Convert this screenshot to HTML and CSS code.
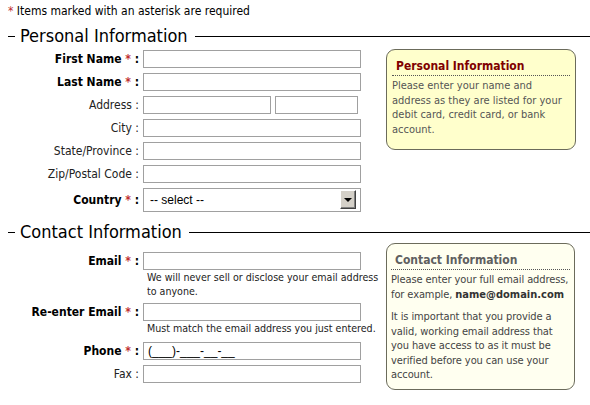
FILE: index.html
```html
<!DOCTYPE html>
<html>
<head>
<meta charset="utf-8">
<link rel="stylesheet" href="styles.css">
</head>
<body>
<p class="req"><span class="ast">*</span> Items marked with an asterisk are required</p>

<section class="sec">
  <h2 class="legend"><span class="dash"></span><span class="lt">Personal Information</span><span class="rule"></span></h2>
  <div class="cols">
    <div class="fields">
      <div class="row"><label class="lbl b">First Name <span class="ast">*</span> :</label><span class="inp"></span></div>
      <div class="row"><label class="lbl b">Last Name <span class="ast">*</span> :</label><span class="inp"></span></div>
      <div class="row"><label class="lbl">Address :</label><span class="pair"><span class="inp a1"></span><span class="inp a2"></span></span></div>
      <div class="row"><label class="lbl">City :</label><span class="inp"></span></div>
      <div class="row"><label class="lbl">State/Province :</label><span class="inp"></span></div>
      <div class="row"><label class="lbl">Zip/Postal Code :</label><span class="inp"></span></div>
      <div class="row"><label class="lbl b">Country <span class="ast">*</span> :</label><span class="sel"><span class="seltext">-- select --</span><span class="arrow"><span class="tri"></span></span></span></div>
    </div>
    <aside class="box box1">
      <h3 class="bt">Personal Information</h3>
      <p class="bp">Please enter your name and address as they are listed for your debit card, credit card, or bank account.</p>
    </aside>
  </div>
</section>

<section class="sec sec2">
  <h2 class="legend"><span class="dash"></span><span class="lt">Contact Information</span><span class="rule"></span></h2>
  <div class="cols">
    <div class="fields">
      <div class="row"><label class="lbl b">Email <span class="ast">*</span> :</label><span class="inp"></span></div>
      <div class="hint h1">We will never sell or disclose your email address to anyone.</div>
      <div class="row"><label class="lbl b">Re-enter Email <span class="ast">*</span> :</label><span class="inp"></span></div>
      <div class="hint h2">Must match the email address you just entered.</div>
      <div class="row"><label class="lbl b">Phone <span class="ast">*</span> :</label><span class="inp"><span class="mask">(___)-___-__-__</span></span></div>
      <div class="row"><label class="lbl">Fax :</label><span class="inp"></span></div>
    </div>
    <aside class="box box2">
      <h3 class="bt">Contact Information</h3>
      <p class="bp"><span class="ln">Please enter your full email address,</span><span class="ln">for example, <b>name@domain.com</b></span></p>
      <p class="bp">It is important that you provide a valid, working email address that you have access to as it must be verified before you can use your account.</p>
    </aside>
  </div>
</section>
</body>
</html>
```
FILE: styles.css
```css
* { box-sizing: border-box; }
body {
  margin: 0;
  padding: 4px 0 0 8px;
  background: #fff;
  color: #000;
  font-family: "DejaVu Sans Condensed", "DejaVu Sans", sans-serif;
  font-stretch: semi-condensed;
  font-size: 11px;
}
.req { margin: 0; line-height: 14px; font-size: 12px; color: #000; }
.ast { color: #c03030; }

.legend {
  display: flex;
  align-items: center;
  margin: 8px 0 4px 0;
  font-size: 18px;
  font-weight: normal;
  line-height: 20px;
  height: 20px;
}
.dash { width: 7px; height: 1px; background: #000; margin-right: 5px; }
.lt { white-space: nowrap; }
.rule { flex: 1; height: 1px; background: #000; margin-left: 7px; }

.cols { display: flex; align-items: flex-start; }
.fields { width: 353px; display: flex; flex-direction: column; gap: 5px; }
.row { display: grid; grid-template-columns: 131px 218px; column-gap: 4px; align-items: center; }
.lbl { text-align: right; white-space: nowrap; color: #222; font-size: 12px; }
.lbl.b { font-weight: bold; color: #000; }

.inp {
  display: block;
  height: 18px;
  border: 1px solid #a0a0a0;
  background: #fff;
  font-size: 12px;
  line-height: 16px;
  padding-left: 4px;
}
.pair { display: flex; gap: 4px; }
.a1 { width: 128px; }
.a2 { width: 83px; }
.mask { font-family: "Liberation Sans", sans-serif; font-size: 12px; }

.sel {
  position: relative;
  display: block;
  height: 24px;
  border: 1px solid #a0a0a0;
  background: #fff;
}
.seltext {
  display: block;
  font-family: "Liberation Sans", sans-serif;
  font-size: 12px;
  line-height: 22px;
  padding-left: 6px;
}
.arrow {
  position: absolute;
  right: 4px;
  top: 1px;
  width: 16px;
  height: 19px;
  background: #d4d0c8;
  border-top: 1px solid #fff;
  border-left: 1px solid #fff;
  border-right: 1px solid #404040;
  border-bottom: 1px solid #404040;
  box-shadow: inset -1px -1px 0 #808080;
  display: flex;
  align-items: center;
  justify-content: center;
}
.tri {
  width: 0; height: 0;
  border-left: 4px solid transparent;
  border-right: 4px solid transparent;
  border-top: 4px solid #000;
}

.box {
  margin-left: 25px;
  width: 190px;
  border: 1px solid #6b6b5b;
  border-radius: 9px;
  padding: 8px 5px 12px 5px;
}
.box1 { margin-top: -1px; background: #ffffcc; }
.box2 { margin-top: -9px; background: #fffff0; width: 189px; padding: 8px 4px 6px 4px; }
.bt {
  margin: 0;
  font-size: 12px;
  font-weight: bold;
  line-height: 16px;
  padding: 0 0 1px 4px;
  border-bottom: 1px dotted #555;
  color: #800000;
}
.box2 .bt { color: #606060; }
.bp { margin: 3px 0 0 0; line-height: 14.5px; color: #555; }
.box2 .bp { color: #444; letter-spacing: -0.1px; }
.box2 .bp + .bp { margin-top: 8px; }
.box2 .bp b { color: #333; letter-spacing: 0; }
.ln { display: block; white-space: nowrap; }

.sec2 .legend { margin-top: 10px; margin-bottom: 10px; }
.sec2 .fields { gap: 0; }
.sec2 .row + .row { margin-top: 5px; }
.hint { width: 236px; margin: 0 0 5px 139px; font-size: 10.6px; line-height: 14px; color: #222; }
.h1 { white-space: normal; }
.h2 { white-space: nowrap; margin-bottom: 7px; }
```
